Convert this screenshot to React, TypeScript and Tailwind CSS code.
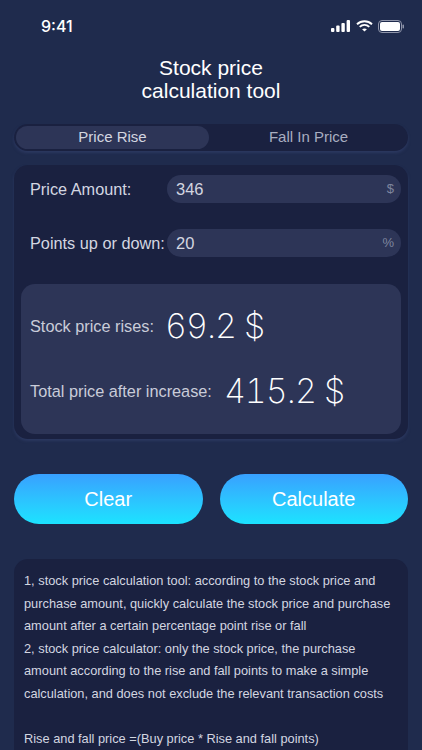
const font = "font-['Liberation_Sans',sans-serif]";

const InputRow = ({ label, value, unit, gap }: { label: string; value: string; unit: string; gap: string }) => {
  return (
    <div className={`flex items-center justify-between pl-[16px] pr-[7px] ${gap}`}>
      <span className="text-[16.3px] leading-[27px] text-[#d3d6e0] whitespace-nowrap">{label}</span>
      <div className="flex h-[28px] w-[234px] items-center justify-between rounded-full bg-[#2d3557] pl-[9px] pr-[7px]">
        <span className="text-[16.5px] text-[#d3d6e0]">{value}</span>
        <span className="text-[13px] text-[#7f869f]">{unit}</span>
      </div>
    </div>
  );
};

const ResultRow = ({ label, value, gap }: { label: string; value: string; gap: string }) => {
  return (
    <div className={`flex items-center pl-[9px] ${gap}`}>
      <span className="text-[16.3px] text-[#c9ccd9] whitespace-nowrap">{label}</span>
      <span className="font-['Inter',sans-serif] text-[34px] font-extralight tabular-nums tracking-[-1px] leading-[40px] text-white whitespace-nowrap">
        {value}
      </span>
    </div>
  );
};

const StatusBar = () => {
  return (
    <div className="flex h-[52px] items-center justify-between pl-[41px] pr-[18px]">
      <span className="font-['Inter',sans-serif] text-[16px] font-medium text-white">9:41</span>
      <div className="flex items-center gap-[5px]">
        <svg width="20" height="12" viewBox="0 0 20 12" fill="white">
          <rect x="0" y="8" width="3.4" height="4" rx="1" />
          <rect x="5.2" y="5.5" width="3.4" height="6.5" rx="1" />
          <rect x="10.4" y="3" width="3.4" height="9" rx="1" />
          <rect x="15.6" y="0" width="3.4" height="12" rx="1" />
        </svg>
        <svg width="17" height="12" viewBox="0 0 17 12" fill="none" stroke="white" strokeWidth="1.9">
          <path d="M1 4.2C5.3 0.2 11.7 0.2 16 4.2" />
          <path d="M3.7 6.9C6.5 4.4 10.5 4.4 13.3 6.9" />
          <path d="M8.5 11.6L6.1 9.3C7.5 8.2 9.5 8.2 10.9 9.3Z" fill="white" stroke="none" />
        </svg>
        <svg width="26" height="13" viewBox="0 0 26 13" fill="none">
          <rect x="0.5" y="0.5" width="23" height="12" rx="3.5" stroke="#8f95aa" />
          <rect x="2" y="2" width="20" height="9" rx="2" fill="white" />
          <rect x="24.5" y="4.5" width="1.5" height="4" rx="0.75" fill="#8f95aa" />
        </svg>
      </div>
    </div>
  );
};

const App = () => {
  return (
    <div className={`h-[750px] w-[422px] overflow-hidden bg-[#1f2b4d] ${font}`}>
      <StatusBar />
      <h1 className="mt-[5px] text-center text-[21px] leading-[22.5px] text-white">
        Stock price
        <br />
        calculation tool
      </h1>
      <div className="mx-[14px] mt-[22px] flex h-[27px] items-center rounded-full bg-[#1a2140] pl-[2px] shadow-[0_2px_3px_rgba(55,70,115,0.5)]">
        <div className="flex h-[23px] w-[193px] items-center justify-center rounded-full bg-[#2d3557] text-[15px] text-[#d3d6e0]">
          Price Rise
        </div>
        <div className="flex-1 text-center text-[15px] text-[#a9aec0]">Fall In Price</div>
      </div>
      <div className="mx-[14px] mt-[14px] h-[274px] rounded-[14px] bg-[#1a2140] pt-[10px] shadow-[0_2px_3px_rgba(55,70,115,0.5)]">
        <InputRow label="Price Amount:" value="346" unit="$" gap="" />
        <InputRow label="Points up or down:" value="20" unit="%" gap="mt-[26px]" />
        <div className="mx-[7px] mt-[27px] h-[150px] rounded-[14px] bg-[#2d3557] pt-[22px]">
          <ResultRow label="Stock price rises:" value="69.2 $" gap="gap-[11px]" />
          <ResultRow label="Total price after increase:" value="415.2 $" gap="mt-[25px] gap-[12px]" />
        </div>
      </div>
      <div className="mx-[14px] mt-[35px] flex gap-[17px]">
        <button className="h-[50px] flex-1 rounded-full bg-gradient-to-b from-[#38a0ff] to-[#1be3ff] text-[20px] font-medium text-white">
          Clear
        </button>
        <button className="h-[50px] flex-1 rounded-full bg-gradient-to-b from-[#38a0ff] to-[#1be3ff] text-[20px] font-medium text-white">
          Calculate
        </button>
      </div>
      <div className="mx-[14px] mt-[35px] h-[220px] rounded-[14px] bg-[#1a2140] pl-[10px] pr-[12px] pt-[11px] text-[12.8px] leading-[22.5px] text-[#d3d6e0]">
        <p>1, stock price calculation tool: according to the stock price and purchase amount, quickly calculate the stock price and purchase amount after a certain percentage point rise or fall</p>
        <p>2, stock price calculator: only the stock price, the purchase amount according to the rise and fall points to make a simple calculation, and does not exclude the relevant transaction costs</p>
        <p className="mt-[22.5px]">Rise and fall price =(Buy price * Rise and fall points)</p>
      </div>
    </div>
  );
};

export default App;
